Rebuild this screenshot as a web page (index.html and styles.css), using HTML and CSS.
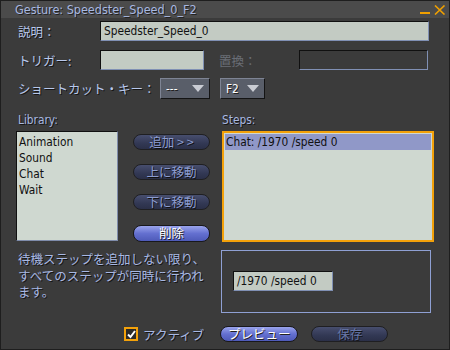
FILE: index.html
```html
<!DOCTYPE html>
<html lang="ja">
<head>
<meta charset="utf-8">
<link rel="stylesheet" href="styles.css">
</head>
<body>
<div class="window">
  <div class="titlebar">
    <span class="title">Gesture: Speedster_Speed_0_F2</span>
    <span class="controls">
      <svg class="ctl" width="11" height="10" viewBox="0 0 11 10"><rect x="0" y="7" width="10" height="2" fill="#f0a000"/></svg>
      <svg class="ctl" width="12" height="10" viewBox="0 0 12 10"><path d="M1 0.5 L10.5 9.5 M10.5 0.5 L1 9.5" stroke="#f0a000" stroke-width="1.6"/></svg>
    </span>
  </div>
  <div class="content">
    <div class="row r1">
      <span class="label jp">説明：</span>
      <div class="input wide">Speedster_Speed_0</div>
    </div>
    <div class="row r2">
      <span class="label jp">トリガー:</span>
      <div class="input trig"></div>
      <span class="label jp dim repl">置換：</span>
      <div class="input dark"></div>
    </div>
    <div class="row r3">
      <span class="label jp">ショートカット・キー：</span>
      <div class="combo c1"><span>---</span><i class="tri"></i></div>
      <div class="combo c2"><span>F2</span><i class="tri"></i></div>
    </div>
    <div class="main">
      <div class="col lib">
        <div class="caption">Library:</div>
        <div class="list">
          <div class="item">Animation</div>
          <div class="item">Sound</div>
          <div class="item">Chat</div>
          <div class="item">Wait</div>
        </div>
      </div>
      <div class="btns">
        <div class="btn jp">追加 &gt; &gt;</div>
        <div class="btn jp">上に移動</div>
        <div class="btn jp">下に移動</div>
        <div class="btn bright jp">削除</div>
      </div>
      <div class="col steps">
        <div class="caption">Steps:</div>
        <div class="list orange">
          <div class="item sel">Chat: /1970 /speed 0</div>
        </div>
      </div>
    </div>
    <div class="lower">
      <p class="desc jp">待機ステップを追加しない限り、<br>すべてのステップが同時に行われ<br>ます。</p>
      <div class="opts">
        <div class="input small">/1970 /speed 0</div>
      </div>
    </div>
    <div class="bottom">
      <span class="check"><svg width="9" height="9" viewBox="0 0 9 9"><path d="M1 4.5 L3.5 7 L8 1" stroke="#fff" stroke-width="2" fill="none"/></svg></span>
      <span class="label jp active">アクティブ</span>
      <div class="btn bright jp pv">プレビュー</div>
      <div class="btn jp save">保存</div>
    </div>
  </div>
</div>
</body>
</html>
```

FILE: styles.css
```css
* { box-sizing: border-box; }
html, body { margin: 0; padding: 0; background: #3b3b3b; }
body { width: 450px; height: 350px; overflow: hidden; font-family: "DejaVu Sans Condensed", "DejaVu Sans", "Noto Sans CJK JP", sans-serif; font-stretch: condensed; font-size: 11.8px; }
.jp { font-family: "Noto Sans CJK JP", "DejaVu Sans", sans-serif; font-stretch: normal; font-size: 12.5px; font-weight: 400; }
.window { width: 450px; height: 350px; background: #3b3b3b; border: 1px solid #1e1e1e; }
.titlebar { height: 17px; background: #4b4b4b; display: flex; align-items: center; padding-left: 14px; padding-right: 3px; }
.title { color: #a8b8e0; font-size: 12.5px; text-shadow: 1px 1px 0 #222; flex: 1; }
.controls { display: flex; gap: 3px; align-items: center; }
.ctl { display: block; }
.content { padding: 3px 0 0 15px; }
.row { display: flex; align-items: center; height: 20px; }
.r2 { margin-top: 9px; }
.r3 { margin-top: 8px; height: 21px; }
.label { color: #b8c8ec; text-shadow: 1px 1px 0 #151515; }
.row > .label:first-child { width: 84px; padding-left: 2px; }
.r3 > .label:first-child { width: 144px; }
.dim { color: #6a6e76; text-shadow: none; }
.repl { width: 80px; margin-left: 15px; }
.input { height: 20px; background: #c3cbc3; border-top: 1px solid #101010; border-left: 1px solid #101010; border-right: 1px solid #8090b4; border-bottom: 1px solid #8090b4; color: #111; padding-left: 3px; line-height: 18px; }
.wide { width: 329px; }
.trig { width: 104px; }
.dark { background: #3b3b3b; width: 129px; }
.combo { height: 21px; background: #595e69; border-top: 1px solid #7e8494; border-left: 1px solid #7e8494; border-right: 1px solid #141414; border-bottom: 1px solid #141414; display: flex; align-items: center; justify-content: space-between; padding: 0 5px 0 5px; color: #fff; text-shadow: 1px 1px 0 #222; }
.c1 { width: 50px; }
.c2 { width: 45px; margin-left: 10px; }
.tri { width: 0; height: 0; border-left: 6px solid transparent; border-right: 6px solid transparent; border-top: 7px solid #c9ccd3; }
.main { display: flex; margin-top: 14px; }
.caption { color: #a8b8e0; height: 18px; text-shadow: 1px 1px 0 #151515; padding-left: 2px; }
.lib { width: 102px; }
.list { background: #cfd8d0; border-top: 1px solid #101010; border-left: 1px solid #101010; border-right: 1px solid #7f8cab; border-bottom: 1px solid #7f8cab; color: #111; padding-top: 2px; }
.lib .list { height: 110px; padding-left: 2px; }
.item { height: 16px; line-height: 16px; }
.btns { display: flex; flex-direction: column; gap: 14px; margin-left: 15px; padding-top: 21px; width: 77px; }
.btn { height: 16px; border-radius: 8px; border: 1px solid #1f1f22; background: linear-gradient(#474e6e, #323854 60%, #2b3048); color: #8c9cd0; text-align: center; line-height: 13px; text-shadow: 1px 1px 0 #111; white-space: nowrap; }
.btn.bright { background: linear-gradient(#9aa4ec, #6470d0 50%, #4e5ab8); color: #fff; text-shadow: 1px 1px 0 #222; border-color: #18181c; }
.btns .bright { height: 17px; margin-top: 1px; }
.steps { width: 212px; margin-left: 12px; }
.steps .caption { padding-left: 0; }
.orange { height: 111px; border: 2px solid #f3a10a; padding: 1px 1px; }
.sel { background: #9098c8; height: 16px; line-height: 16px; padding-left: 1px; }
.lower { display: flex; margin-top: 8px; }
.desc { margin: 0; width: 205px; color: #a8b8e4; line-height: 16.5px; padding-left: 2px; padding-top: 1px; text-shadow: 1px 1px 0 #151515; }
.opts { width: 210px; height: 63px; border: 1px solid #8fa0d4; padding: 20px 0 0 11px; }
.small { width: 100px; height: 20px; background: #c3cbc3; }
.bottom { display: flex; align-items: center; margin-top: 13px; height: 16px; }
.check { width: 14px; height: 14px; border: 2px solid #f3a10a; background: #2a2a2a; margin-left: 108px; display: flex; align-items: center; justify-content: center; }
.active { margin-left: 5px; color: #a8b8e4; }
.pv { width: 78px; margin-left: 16px; height: 16px; }
.save { width: 77px; margin-left: 13px; color: #6676a8; }
```
